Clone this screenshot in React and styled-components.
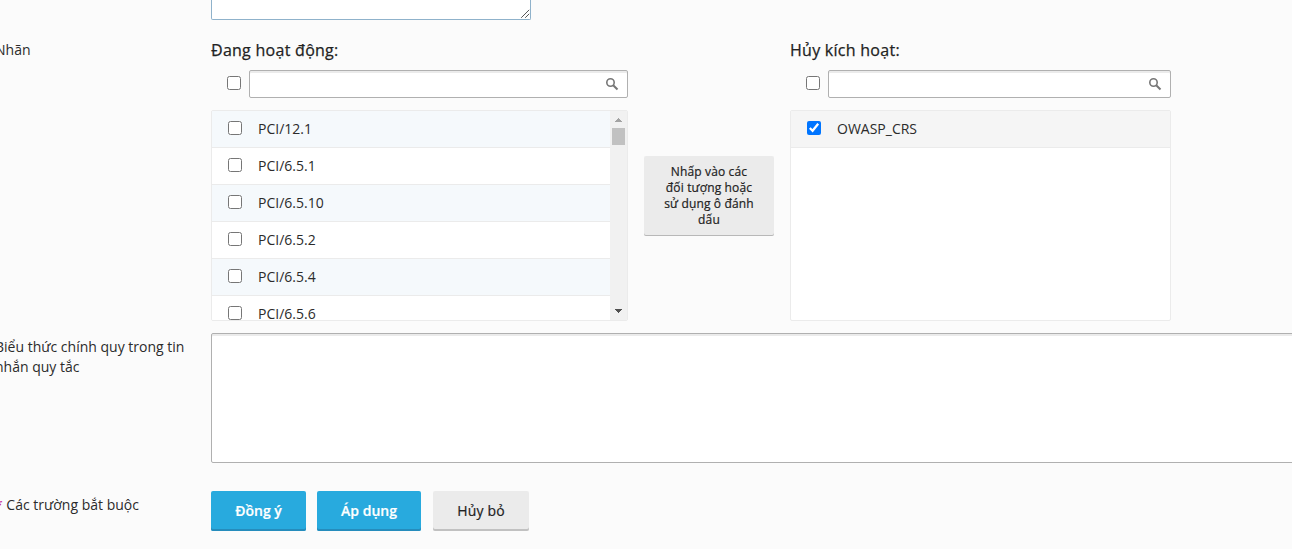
import React, { useState } from "react";
import styled, { createGlobalStyle } from "styled-components";

const GlobalStyle = createGlobalStyle`
  *, *::before, *::after { box-sizing: border-box; }
  body {
    margin: 0;
    overflow: hidden;
    background: #fbfbfb;
    color: #222;
    font: 14px/20px "Open Sans", "Noto Sans", sans-serif;
  }
`;

const Form = styled.form`
  display: flex;
  flex-direction: column;
  width: 1320px;
  height: 549px;
  margin-left: -5px;
`;

const FieldRow = styled.div`
  display: flex;
  height: ${(p) => p.$height}px;
`;

const Label = styled.div`
  flex: none;
  width: 216px;
  padding: ${(p) => p.$top || 0}px 16px 0 0;
  color: #2b2b2b;
`;

const Required = styled.span`
  color: #c6168d;
`;

const Description = styled.div`
  display: flex;
  align-items: flex-end;
  justify-content: flex-end;
  width: 320px;
  height: 20px;
  padding: 0 0 1px;
  background: #fff;
  border: 1px solid #8fb2cb;
  border-top: 0;
  border-radius: 0 0 2px 2px;
`;

const Transfer = styled.div`
  display: flex;
  align-items: flex-start;
  gap: 16px;
`;

const Panel = styled.section`
  width: ${(p) => p.$width}px;
`;

const PanelTitle = styled.h3`
  height: 30px;
  margin: 0;
  font-size: 16px;
  line-height: 20px;
  font-weight: 500;
  letter-spacing: 0.27px;
  -webkit-text-stroke: 0.25px currentColor;
`;

const SearchRow = styled.div`
  display: flex;
  align-items: flex-start;
  gap: 8px;
  height: 40px;
  padding-left: 16px;
`;

const Check = styled.input.attrs({ type: "checkbox" })`
  flex: none;
  width: 14px;
  height: 14px;
  margin: ${(p) => p.$top || 0}px 0 0;
`;

const SearchBox = styled.div`
  display: flex;
  flex: 1;
  height: 28px;
  padding: 7px 8px 0 8px;
  background: #fff;
  border: 1px solid #b0b0b0;
  border-radius: 2px;
  box-shadow: inset 0 2px 0 #ebebeb;
`;

const SearchInput = styled.input`
  flex: 1;
  height: 16px;
  min-width: 0;
  padding: 0;
  background: transparent;
  border: 0;
  outline: 0;
  font: inherit;
`;

const ListBox = styled.div`
  display: flex;
  height: 211px;
  overflow: hidden;
  background: #fff;
  border: 1px solid #ebebeb;
  border-radius: 2px;
`;

const Items = styled.div`
  flex: 1;
  overflow: hidden;
`;

const Item = styled.label`
  display: flex;
  gap: 16px;
  height: 37px;
  padding: 8px 16px 0;
  color: #2b2b2b;
  background: ${(p) => p.$background};
  border-bottom: 1px solid #ebebeb;
`;

const Scrollbar = styled.div`
  display: flex;
  flex-direction: column;
  align-items: center;
  width: 17px;
  padding: 7px 0;
  background: #f1f1f1;
`;

const Thumb = styled.div`
  width: 13px;
  height: 17px;
  margin: 6px 0 auto;
  background: #c1c1c1;
`;

const Button = styled.button`
  height: 40px;
  width: ${(p) => p.$width}px;
  margin: 0 ${(p) => p.$gap || 0}px 0 0;
  padding: 0 0 1px;
  border: 0;
  border-radius: 2px;
  font: ${(p) => (p.$primary ? 600 : 500)} 14px/20px "Open Sans", "Noto Sans", sans-serif;
  letter-spacing: ${(p) => (p.$primary ? 0 : 0.15)}px;
  -webkit-text-stroke: 0.2px currentColor;
  color: ${(p) => (p.$primary ? "#fff" : "#222")};
  background: ${(p) => (p.$primary ? "#28aade" : "#ebebeb")};
  box-shadow: inset 0 -2px 0 ${(p) => (p.$primary ? "#258cbc" : "#c1c1c1")};
`;

const HintButton = styled(Button)`
  height: 80px;
  margin-top: 116px;
  padding: 0 18px;
  font-size: 12px;
  line-height: 16px;
  box-shadow: inset 0 -1px 0 #b8b8b8;
`;

const Pattern = styled.textarea`
  display: block;
  width: 1100px;
  height: 130px;
  margin: 0;
  background: #fff;
  border: 1px solid #b0b0b0;
  border-radius: 2px;
  box-shadow: inset 0 2px 0 #ebebeb;
  outline: 0;
  resize: none;
`;

const Magnifier = () => (
  <svg width="14" height="13" viewBox="0 0 14 13" fill="none" stroke="#777">
    <circle cx="5.5" cy="4.5" r="3.7" strokeWidth="1.6" />
    <path d="M8.2 7.2L12.5 11.5" strokeWidth="2" />
  </svg>
);

const Grip = () => (
  <svg width="9" height="9" viewBox="0 0 9 9" stroke="#555" strokeWidth="1" fill="none">
    <path d="M0.2 8.8L8.2 0.8M4.2 8.8L8.2 4.8" />
  </svg>
);

const Arrow = ({ down }) => (
  <svg width="7" height="4" viewBox="0 0 7 4" fill={down ? "#505050" : "#a3a3a3"} shapeRendering="crispEdges">
    <path d={down ? "M0 0H7L3.5 4Z" : "M0 4H7L3.5 0Z"} />
  </svg>
);

function TagPanel({ title, width, tags, checked = false, scroll = false }) {
  const [selected, setSelected] = useState(checked ? tags : []);
  const toggle = (tag) =>
    setSelected((s) => (s.includes(tag) ? s.filter((t) => t !== tag) : [...s, tag]));
  return (
    <Panel $width={width}>
      <PanelTitle>{title}</PanelTitle>
      <SearchRow>
        <Check $top={6} />
        <SearchBox>
          <SearchInput />
          <Magnifier />
        </SearchBox>
      </SearchRow>
      <ListBox>
        <Items>
          {tags.map((tag, i) => (
            <Item key={tag} $background={selected.includes(tag) ? "#f5f5f5" : i % 2 ? "#fff" : "#f5f9fc"}>
              <Check $top={2} checked={selected.includes(tag)} onChange={() => toggle(tag)} />
              {tag}
            </Item>
          ))}
        </Items>
        {scroll && (
          <Scrollbar>
            <Arrow />
            <Thumb />
            <Arrow down />
          </Scrollbar>
        )}
      </ListBox>
    </Panel>
  );
}

export default function App() {
  return (
    <>
      <GlobalStyle />
      <Form onSubmit={(e) => e.preventDefault()}>
        <FieldRow $height={40}>
          <Label />
          <Description>
            <Grip />
          </Description>
        </FieldRow>
        <FieldRow $height={293}>
          <Label>Nhãn</Label>
          <Transfer>
            <TagPanel
              title="Đang hoạt động:"
              width={417}
              tags={["PCI/12.1", "PCI/6.5.1", "PCI/6.5.10", "PCI/6.5.2", "PCI/6.5.4", "PCI/6.5.6"]}
              scroll
            />
            <HintButton type="button" $width={130}>
              Nhấp vào các đối tượng hoặc sử dụng ô đánh dấu
            </HintButton>
            <TagPanel title="Hủy kích hoạt:" width={381} tags={["OWASP_CRS"]} checked />
          </Transfer>
        </FieldRow>
        <FieldRow $height={158}>
          <Label $top={4}>Biểu thức chính quy trong tin nhắn quy tắc</Label>
          <Pattern />
        </FieldRow>
        <FieldRow $height={40}>
          <Label $top={4}>
            <Required>*</Required> Các trường bắt buộc
          </Label>
          <Button $primary $width={95} $gap={11}>Đồng ý</Button>
          <Button type="button" $primary $width={104} $gap={12}>Áp dụng</Button>
          <Button type="button" $width={96}>Hủy bỏ</Button>
        </FieldRow>
      </Form>
    </>
  );
}
